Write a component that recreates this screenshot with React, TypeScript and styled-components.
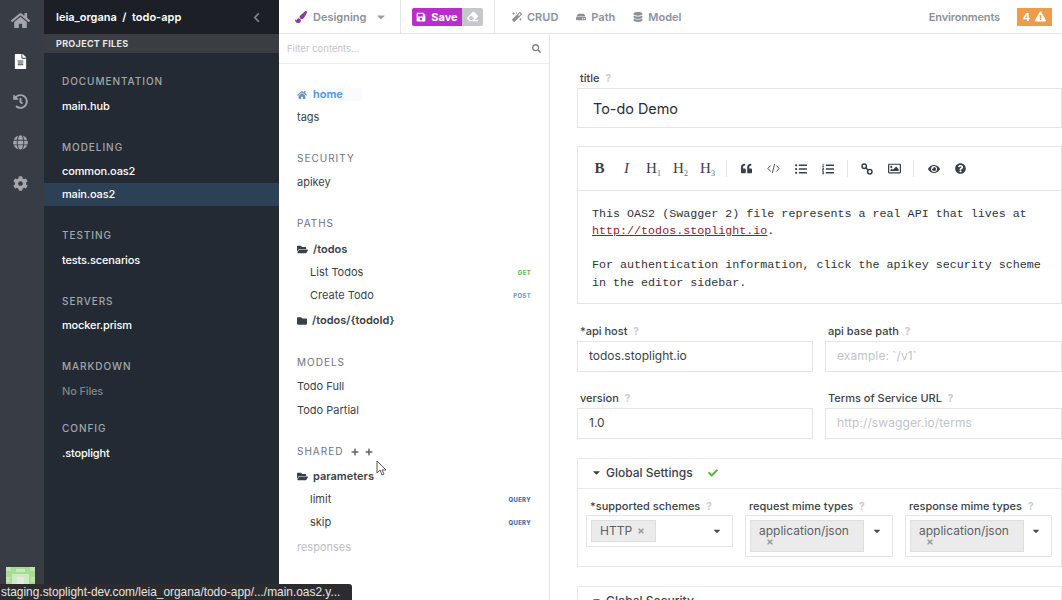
import React from "react";
import styled, { createGlobalStyle } from "styled-components";
import {
  FaHome,
  FaFileAlt,
  FaHistory,
  FaGlobe,
  FaCog,
  FaChevronLeft,
  FaPaintBrush,
  FaCaretDown,
  FaSave,
  FaEraser,
  FaMagic,
  FaHdd,
  FaDatabase,
  FaExclamationTriangle,
  FaSearch,
  FaFolderOpen,
  FaFolder,
  FaPlus,
  FaQuoteLeft,
  FaListUl,
  FaListOl,
  FaRegImage,
  FaEye,
  FaQuestionCircle,
  FaCheck,
  FaTimes,
} from "react-icons/fa";

const GlobalStyle = createGlobalStyle`
  html, body {
    margin: 0;
    height: 100%;
    overflow: hidden;
    background: #fff;
  }
  * { box-sizing: border-box; }
  body {
    font-family: Inter, "Liberation Sans", sans-serif;
    color: #3b3f46;
  }
`;

type FileGroup = { title: string; files: Array<{ name: string; active?: boolean; muted?: boolean }> };

const fileGroups: Array<FileGroup> = [
  { title: "DOCUMENTATION", files: [{ name: "main.hub" }] },
  { title: "MODELING", files: [{ name: "common.oas2" }, { name: "main.oas2", active: true }] },
  { title: "TESTING", files: [{ name: "tests.scenarios" }] },
  { title: "SERVERS", files: [{ name: "mocker.prism" }] },
  { title: "MARKDOWN", files: [{ name: "No Files", muted: true }] },
  { title: "CONFIG", files: [{ name: ".stoplight" }] },
];

const CodeIcon = () => (
  <svg width="13" height="11" viewBox="0 0 13 11" fill="none" stroke="currentColor" strokeWidth="0.9">
    <path d="M3.6 2.5 0.9 5.5l2.7 3M9.4 2.5l2.7 3-2.7 3M7.6 1 5.4 10" />
  </svg>
);

const LinkIcon = () => (
  <svg width="12" height="12" viewBox="0 0 12 12" fill="none" stroke="currentColor" strokeWidth="1.5">
    <circle cx="3.2" cy="3.2" r="2.2" />
    <circle cx="8.8" cy="8.8" r="2.2" />
    <path d="M4.8 4.8l2.4 2.4" />
  </svg>
);

const App: React.FC = () => {
  return (
    <Page>
      <GlobalStyle />
      <Rail>
        <RailIcon><FaHome size={19} /></RailIcon>
        <RailIcon $active><FaFileAlt size={15} /></RailIcon>
        <RailIcon><FaHistory size={15} /></RailIcon>
        <RailIcon><FaGlobe size={15} /></RailIcon>
        <RailIcon><FaCog size={15} /></RailIcon>
        <Avatar>
          <svg width="29" height="18" viewBox="0 0 29 18">
            <rect width="29" height="18" fill="#a9dc92" />
            <rect x="0" y="0" width="5" height="4" fill="#bfe3ae" />
            <rect x="24" y="0" width="5" height="4" fill="#bfe3ae" />
            <rect x="10" y="2" width="9" height="3" fill="#c9e8bb" />
            <rect x="6" y="7" width="17" height="11" fill="#cfe9c4" />
            <rect x="11" y="10" width="7" height="8" fill="#e2ebde" />
            <rect x="0" y="10" width="4" height="5" fill="#bfe3ae" />
            <rect x="25" y="10" width="4" height="5" fill="#bfe3ae" />
          </svg>
        </Avatar>
      </Rail>

      <FileSidebar>
        <ProjectHeader>
          <span>leia_organa&nbsp;&nbsp;/&nbsp;&nbsp;todo-app</span>
          <FaChevronLeft size={11} color="#7d828a" />
        </ProjectHeader>
        <ProjectBar>PROJECT FILES</ProjectBar>
        <FileGroups>
          {fileGroups.map((group) => (
            <div key={group.title}>
              <FileGroupTitle>{group.title}</FileGroupTitle>
              {group.files.map((file) => (
                <FileRow key={file.name} $active={file.active} $muted={file.muted}>
                  {file.name}
                </FileRow>
              ))}
            </div>
          ))}
        </FileGroups>
      </FileSidebar>

      <Main>
        <TopBar>
          <ModeCell>
            <FaPaintBrush size={12} color="#8e3a9d" />
            <span>Designing</span>
            <FaCaretDown size={12} color="#9ba0a7" />
          </ModeCell>
          <SaveCell>
            <SaveButton><FaSave size={10} /> Save</SaveButton>
            <EraseButton><FaEraser size={11} /></EraseButton>
          </SaveCell>
          <TabsCell>
            <TopTab><FaMagic size={10} /> CRUD</TopTab>
            <TopTab><FaHdd size={10} /> Path</TopTab>
            <TopTab><FaDatabase size={10} /> Model</TopTab>
          </TabsCell>
          <TopRight>
            <EnvTab>Environments</EnvTab>
            <WarnBadge>4 <FaExclamationTriangle size={11} /></WarnBadge>
          </TopRight>
        </TopBar>

        <Body>
          <TreePane>
            <FilterBar>
              <span>Filter contents...</span>
              <FaSearch size={9} color="#7d828a" />
            </FilterBar>
            <Tree>
              <TreeGroup>
                <HomeRow><FaHome size={10} /> home</HomeRow>
                <TreeRow>tags</TreeRow>
              </TreeGroup>
              <TreeGroup>
                <TreeTitle>SECURITY</TreeTitle>
                <TreeRow>apikey</TreeRow>
              </TreeGroup>
              <TreeGroup $spaced>
                <TreeTitle>PATHS</TreeTitle>
                <FolderRow><FaFolderOpen size={11} /> /todos</FolderRow>
                <ChildRow>List Todos<Method $color="#6cb85a">GET</Method></ChildRow>
                <ChildRow>Create Todo<Method $color="#7f9cc4">POST</Method></ChildRow>
                <FolderRow><FaFolder size={10} /> /todos/{"{todoId}"}</FolderRow>
              </TreeGroup>
              <TreeGroup>
                <TreeTitle>MODELS</TreeTitle>
                <TreeRow $tall>Todo Full</TreeRow>
                <TreeRow $tall>Todo Partial</TreeRow>
              </TreeGroup>
              <TreeGroup>
                <TreeTitle>
                  SHARED
                  <PlusGroup><FaPlus size={8} /><FaPlus size={8} /></PlusGroup>
                </TreeTitle>
                <FolderRow $tight><FaFolderOpen size={11} /> parameters</FolderRow>
                <ChildRow>limit<Method $color="#4a6fa8">QUERY</Method></ChildRow>
                <ChildRow>skip<Method $color="#4a6fa8">QUERY</Method></ChildRow>
                <MutedRow>responses</MutedRow>
              </TreeGroup>
            </Tree>
            <Cursor width="10" height="16" viewBox="0 0 10 16">
              <path d="M1 1v12l3-3 2 5 2-1-2-4h4z" fill="#fff" stroke="#555" strokeWidth="1" />
            </Cursor>
          </TreePane>

          <EditorPane>
            <FieldLabel>title <Hint>?</Hint></FieldLabel>
            <TitleInput>To-do Demo</TitleInput>

            <Toolbar>
              <ToolGroup>
                <SerifTool><b>B</b></SerifTool>
                <SerifTool><i>I</i></SerifTool>
                <SerifTool>H<sub>1</sub></SerifTool>
                <SerifTool>H<sub>2</sub></SerifTool>
                <SerifTool>H<sub>3</sub></SerifTool>
              </ToolGroup>
              <ToolGroup>
                <Tool><FaQuoteLeft size={11} /></Tool>
                <Tool><CodeIcon /></Tool>
                <Tool><FaListUl size={12} /></Tool>
                <Tool><FaListOl size={12} /></Tool>
              </ToolGroup>
              <ToolGroup>
                <Tool><LinkIcon /></Tool>
                <Tool><FaRegImage size={13} /></Tool>
              </ToolGroup>
              <ToolGroup $last>
                <Tool><FaEye size={12} /></Tool>
                <Tool><FaQuestionCircle size={11} /></Tool>
              </ToolGroup>
            </Toolbar>
            <EditorText>
              <div>This OAS2 (Swagger 2) file represents a real API that lives at</div>
              <div><DocLink>http://todos.stoplight.io</DocLink>.</div>
              <br />
              <div>For authentication information, click the apikey security scheme</div>
              <div>in the editor sidebar.</div>
            </EditorText>

            <FieldGrid>
              <div>
                <FieldLabel>*api host <Hint>?</Hint></FieldLabel>
                <TextInput>todos.stoplight.io</TextInput>
              </div>
              <div>
                <FieldLabel>api base path <Hint>?</Hint></FieldLabel>
                <TextInput $placeholder>example: `/v1`</TextInput>
              </div>
              <div>
                <FieldLabel>version <Hint>?</Hint></FieldLabel>
                <TextInput>1.0</TextInput>
              </div>
              <div>
                <FieldLabel>Terms of Service URL <Hint>?</Hint></FieldLabel>
                <TextInput $placeholder>http://swagger.io/terms</TextInput>
              </div>
            </FieldGrid>

            <Panel>
              <PanelHead>
                <FaCaretDown size={11} /> Global Settings
                <FaCheck size={10} color="#5fae45" />
              </PanelHead>
              <PanelBody>
                <div>
                  <SelectLabel>*supported schemes <Hint>?</Hint></SelectLabel>
                  <SelectBox>
                    <Chip>HTTP <FaTimes size={8} color="#999" /></Chip>
                    <FaCaretDown size={10} />
                  </SelectBox>
                </div>
                <div>
                  <SelectLabel>request mime types <Hint>?</Hint></SelectLabel>
                  <SelectBox>
                    <Chip $wrap>application/json <FaTimes size={8} color="#999" /></Chip>
                    <FaCaretDown size={10} />
                  </SelectBox>
                </div>
                <div>
                  <SelectLabel>response mime types <Hint>?</Hint></SelectLabel>
                  <SelectBox>
                    <Chip $wrap>application/json <FaTimes size={8} color="#999" /></Chip>
                    <FaCaretDown size={10} />
                  </SelectBox>
                </div>
              </PanelBody>
            </Panel>
            <Panel>
              <PanelHead><FaCaretDown size={11} /> Global Security</PanelHead>
            </Panel>
          </EditorPane>
        </Body>
      </Main>

      <StatusBar>staging.stoplight-dev.com/leia_organa/todo-app/.../main.oas2.y...</StatusBar>
    </Page>
  );
};

export default App;

const Page = styled.div`
  position: relative;
  display: flex;
  width: 1062px;
  height: 600px;
  overflow: hidden;
`;

const Rail = styled.nav`
  position: relative;
  width: 44px;
  flex: none;
  background: #383c45;
  display: flex;
  flex-direction: column;
  align-items: center;
  padding-right: 4px;
`;
const RailIcon = styled.div<{ $active?: boolean }>`
  height: 41px;
  width: 100%;
  flex: none;
  display: flex;
  align-items: center;
  justify-content: center;
  margin-top: -0.2px;
  color: ${(p) => (p.$active ? "#fff" : "#a3a6ab")};
`;
const Avatar = styled.div`
  position: absolute;
  left: 6px;
  top: 567px;
  line-height: 0;
`;

const FileSidebar = styled.aside`
  width: 235px;
  flex: none;
  background: #232a33;
  color: #fff;
`;
const ProjectHeader = styled.div`
  height: 34px;
  background: #1c1f26;
  display: flex;
  align-items: center;
  justify-content: space-between;
  padding: 0 17px 0 12px;
  font-size: 11px;
  font-weight: 600;
`;
const ProjectBar = styled.div`
  height: 19px;
  background: #3a3d42;
  padding-left: 12px;
  font-size: 9px;
  font-weight: 700;
  line-height: 19px;
  letter-spacing: 0.3px;
  color: #e6e7e8;
`;
const FileGroups = styled.div`
  padding-top: 16px;
  display: flex;
  flex-direction: column;
  gap: 17px;
`;
const FileGroupTitle = styled.div`
  height: 25.5px;
  line-height: 25px;
  padding-left: 18px;
  font-size: 10px;
  font-weight: 500;
  letter-spacing: 0.95px;
  color: #a4a7ac;
`;
const FileRow = styled.div<{ $active?: boolean; $muted?: boolean }>`
  height: 23px;
  line-height: 23px;
  padding-left: 18px;
  font-size: 11px;
  font-weight: 500;
  letter-spacing: -0.15px;
  margin-bottom: ${(p) => (p.$muted ? "-3.5px" : "0")};
  background: ${(p) => (p.$active ? "#2c4056" : "transparent")};
  color: ${(p) => (p.$muted ? "#7f858c" : "#fff")};
`;

const Main = styled.div`
  flex: 1;
  min-width: 0;
  display: flex;
  flex-direction: column;
`;
const TopBar = styled.header`
  height: 34px;
  flex: none;
  display: flex;
  align-items: stretch;
  border-bottom: 1px solid #e4e5e7;
  font-size: 11px;
  font-weight: 600;
  color: #8c9198;
`;
const ModeCell = styled.div`
  width: 122px;
  display: flex;
  align-items: center;
  gap: 6px;
  padding-left: 16px;
  border-right: 1px solid #e4e5e7;
  svg:last-child { margin-left: 3px; }
`;
const SaveCell = styled.div`
  width: 94px;
  display: flex;
  align-items: center;
  padding-left: 11px;
  border-right: 1px solid #e4e5e7;
`;
const SaveButton = styled.div`
  height: 18px;
  width: 50px;
  display: flex;
  align-items: center;
  justify-content: center;
  gap: 5px;
  background: #b92ecb;
  color: #fff;
  font-weight: 700;
  border-radius: 2px 0 0 2px;
`;
const EraseButton = styled.div`
  height: 18px;
  width: 21px;
  display: flex;
  align-items: center;
  justify-content: center;
  background: #c4c7cc;
  color: #fff;
  border-radius: 0 2px 2px 0;
`;
const TabsCell = styled.div`
  display: flex;
  align-items: center;
  gap: 18px;
  padding-left: 17px;
`;
const TopTab = styled.div`
  display: flex;
  align-items: center;
  gap: 5px;
`;
const EnvTab = styled(TopTab)`
  letter-spacing: -0.15px;
`;
const TopRight = styled.div`
  margin-left: auto;
  display: flex;
  align-items: center;
  gap: 17px;
  padding-right: 10px;
`;
const WarnBadge = styled.div`
  width: 35px;
  height: 18px;
  display: flex;
  align-items: center;
  justify-content: center;
  gap: 5px;
  background: #eb9c4c;
  color: #fff;
  font-weight: 700;
`;

const Body = styled.div`
  flex: 1;
  min-height: 0;
  display: flex;
`;
const TreePane = styled.div`
  position: relative;
  width: 271px;
  flex: none;
  border-right: 1px solid #e4e5e7;
`;
const FilterBar = styled.div`
  height: 30px;
  display: flex;
  align-items: center;
  justify-content: space-between;
  padding: 0 8px;
  border-bottom: 1px solid #ececee;
  font-size: 9.5px;
  color: #c2c4c8;
`;
const Tree = styled.div`
  padding-top: 19px;
  display: flex;
  flex-direction: column;
  gap: 17px;
`;
const TreeGroup = styled.section<{ $spaced?: boolean }>`
  margin-bottom: ${(p) => (p.$spaced ? "1px" : "0")};
`;
const TreeTitle = styled.div`
  height: 25px;
  line-height: 25px;
  padding-left: 18px;
  font-size: 10px;
  letter-spacing: 1px;
  color: #70747b;
  display: flex;
  align-items: center;
`;
const PlusGroup = styled.span`
  display: inline-flex;
  gap: 6px;
  margin-left: 8px;
  color: #5f636a;
`;
const TreeRow = styled.div<{ $tall?: boolean }>`
  height: ${(p) => (p.$tall ? "23.5px" : "23px")};
  line-height: ${(p) => (p.$tall ? "23.5px" : "23px")};
  padding-left: 18px;
  font-size: 11px;
  color: #3b3f46;
`;
const HomeRow = styled(TreeRow)`
  color: #4f94d8;
  font-weight: 600;
  display: flex;
  align-items: center;
  gap: 6px;
  background: linear-gradient(#f9fbfe, #f9fbfe) 17px 5px / 66px 13px no-repeat;
  svg { color: #6d93b8; }
`;
const FolderRow = styled(TreeRow)<{ $tight?: boolean }>`
  margin-top: ${(p) => (p.$tight ? "1px" : "2px")};
  font-weight: 600;
  display: flex;
  align-items: center;
  gap: 5px;
`;
const ChildRow = styled(TreeRow)`
  padding: 0 18px 0 31px;
  display: flex;
  justify-content: space-between;
  align-items: center;
`;
const MutedRow = styled(TreeRow)`
  color: #bcbec2;
  margin-top: 2px;
`;
const Method = styled.span<{ $color: string }>`
  font-size: 6px;
  font-weight: 800;
  letter-spacing: 0.3px;
  color: ${(p) => p.$color};
`;
const Cursor = styled.svg`
  position: absolute;
  left: 97px;
  top: 426px;
`;

const EditorPane = styled.div`
  flex: 1;
  min-width: 0;
  padding: 37px 0 0 27px;
  overflow: hidden;
`;
const FieldLabel = styled.div`
  height: 17px;
  margin-left: 3px;
  font-size: 11px;
  font-weight: 500;
  line-height: 14px;
  color: #3b3f46;
`;
const Hint = styled.span`
  margin-left: 3px;
  font-size: 10px;
  font-weight: 700;
  color: #c9cbce;
`;
const TitleInput = styled.div`
  height: 40px;
  padding-left: 15px;
  line-height: 40px;
  font-size: 14.4px;
  color: #2a2d33;
  border: 1px solid #e4e5e7;
  margin-bottom: 18px;
`;
const Toolbar = styled.div`
  height: 45px;
  display: flex;
  align-items: center;
  padding-left: 8px;
  border: 1px solid #e4e5e7;
  color: #3b3f46;
`;
const ToolGroup = styled.div<{ $last?: boolean }>`
  display: flex;
  align-items: center;
  height: 17px;
  padding-right: 5px;
  margin-right: 6px;
  border-right: ${(p) => (p.$last ? "none" : "1px solid #e4e5e7")};
`;
const Tool = styled.div`
  width: 27.2px;
  display: flex;
  justify-content: center;
  align-items: center;
`;
const SerifTool = styled.div`
  width: 27px;
  text-align: center;
  font-family: "Liberation Serif", serif;
  font-size: 15px;
  line-height: 17px;
  white-space: nowrap;
  sub {
    font-size: 8px;
    color: #666;
    line-height: 0;
    vertical-align: -3px;
  }
`;
const EditorText = styled.div`
  height: 113px;
  padding: 14.6px 0 0 14px;
  font-family: "Liberation Mono", monospace;
  font-size: 11.7px;
  line-height: 17.25px;
  color: #2f3238;
  border: 1px solid #e4e5e7;
  border-top: none;
  margin-bottom: 20px;
  white-space: pre;
  overflow: hidden;
`;
const DocLink = styled.span`
  color: #8b1f2f;
  text-decoration: underline;
`;
const FieldGrid = styled.div`
  display: grid;
  grid-template-columns: 236px 237px;
  column-gap: 12px;
  row-gap: 19px;
  margin-bottom: 19px;
`;
const TextInput = styled.div<{ $placeholder?: boolean }>`
  height: 31px;
  line-height: 28px;
  padding-left: 11px;
  font-size: 12px;
  letter-spacing: ${(p) => (p.$placeholder ? "0.1px" : "0")};
  border: 1px solid #e4e5e7;
  color: ${(p) => (p.$placeholder ? "#c2c4c8" : "#3b3f46")};
`;
const Panel = styled.section`
  border: 1px solid #e8e9ea;
  margin-bottom: 19px;
`;
const PanelHead = styled.div`
  height: 29px;
  padding-bottom: 2px;
  display: flex;
  align-items: center;
  gap: 4px;
  padding-left: 13px;
  font-size: 12px;
  font-weight: 500;
  color: #3b3f46;
  svg:nth-of-type(2) { margin-left: 11px; }
`;
const PanelBody = styled.div`
  height: 78px;
  display: grid;
  grid-template-columns: 147px 148px 147px;
  column-gap: 12px;
  padding: 9px 0 0 8px;
  border-top: 1px solid #e8e9ea;
`;
const SelectLabel = styled.div`
  height: 17px;
  margin-left: 4px;
  font-size: 11px;
  font-weight: 500;
  line-height: 17px;
  white-space: nowrap;
`;
const SelectBox = styled.div`
  min-height: 31px;
  display: flex;
  align-items: flex-start;
  justify-content: space-between;
  padding: 4px 10px 4px 4px;
  border: 1px solid #e4e5e7;
  color: #4a4d53;
  & > svg { margin-top: 6px; flex: none; }
`;
const Chip = styled.div<{ $wrap?: boolean }>`
  width: ${(p) => (p.$wrap ? "114px" : "65px")};
  padding: 0 ${(p) => (p.$wrap ? "0 0 8px" : "8px")};
  line-height: 20px;
  font-size: 12px;
  color: #5d6066;
  background: #ebebec;
  border: 1px solid #dedfe0;
  white-space: nowrap;
  svg {
    display: ${(p) => (p.$wrap ? "block" : "inline")};
    margin: ${(p) => (p.$wrap ? "-3px 0 5px 7px" : "0 0 0 2px")};
  }
`;

const StatusBar = styled.div`
  position: absolute;
  left: 0;
  bottom: 0;
  width: 352px;
  height: 16px;
  padding-left: 1px;
  line-height: 16px;
  font-family: "Liberation Sans", sans-serif;
  font-size: 11.9px;
  color: #e4e4e4;
  background: #2c2c2e;
  border-top-right-radius: 3px;
  white-space: nowrap;
`;
